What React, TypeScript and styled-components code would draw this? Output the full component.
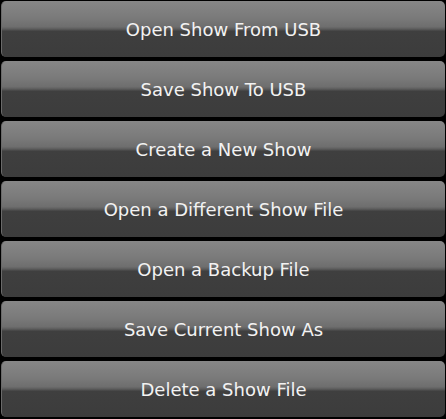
import React from "react";
import styled, { createGlobalStyle } from "styled-components";

const GlobalStyle = createGlobalStyle`
  html, body { margin: 0; padding: 0; background: #000; }
  body { width: 446px; height: 419px; overflow: hidden; }
`;

const Menu = styled.div`
  display: flex;
  flex-direction: column;
  gap: 4px;
  padding: 1px 1px 0 1px;
  background: #000;
  width: 446px;
  height: 419px;
  box-sizing: border-box;
`;

const MenuButton = styled.button`
  height: 56px;
  width: 100%;
  border: none;
  border-left: 1px solid #6a6a6a;
  border-radius: 5px;
  padding: 1px 0 0 0;
  margin: 0;
  display: flex;
  align-items: center;
  justify-content: center;
  font-family: "DejaVu Sans", "Liberation Sans", sans-serif;
  font-size: 18px;
  color: #f2f2f2;
  background: linear-gradient(
    to bottom,
    #878787 0%,
    #7a7a7a 30%,
    #6e6e6e 46%,
    #5c5c5c 50%,
    #3f3f3f 54%,
    #3c3c3c 100%
  );
  cursor: pointer;
`;

const items = [
  "Open Show From USB",
  "Save Show To USB",
  "Create a New Show",
  "Open a Different Show File",
  "Open a Backup File",
  "Save Current Show As",
  "Delete a Show File",
];

export default function App() {
  return (
    <>
      <GlobalStyle />
      <Menu>
        {items.map((t) => (
          <MenuButton key={t}>{t}</MenuButton>
        ))}
      </Menu>
    </>
  );
}
